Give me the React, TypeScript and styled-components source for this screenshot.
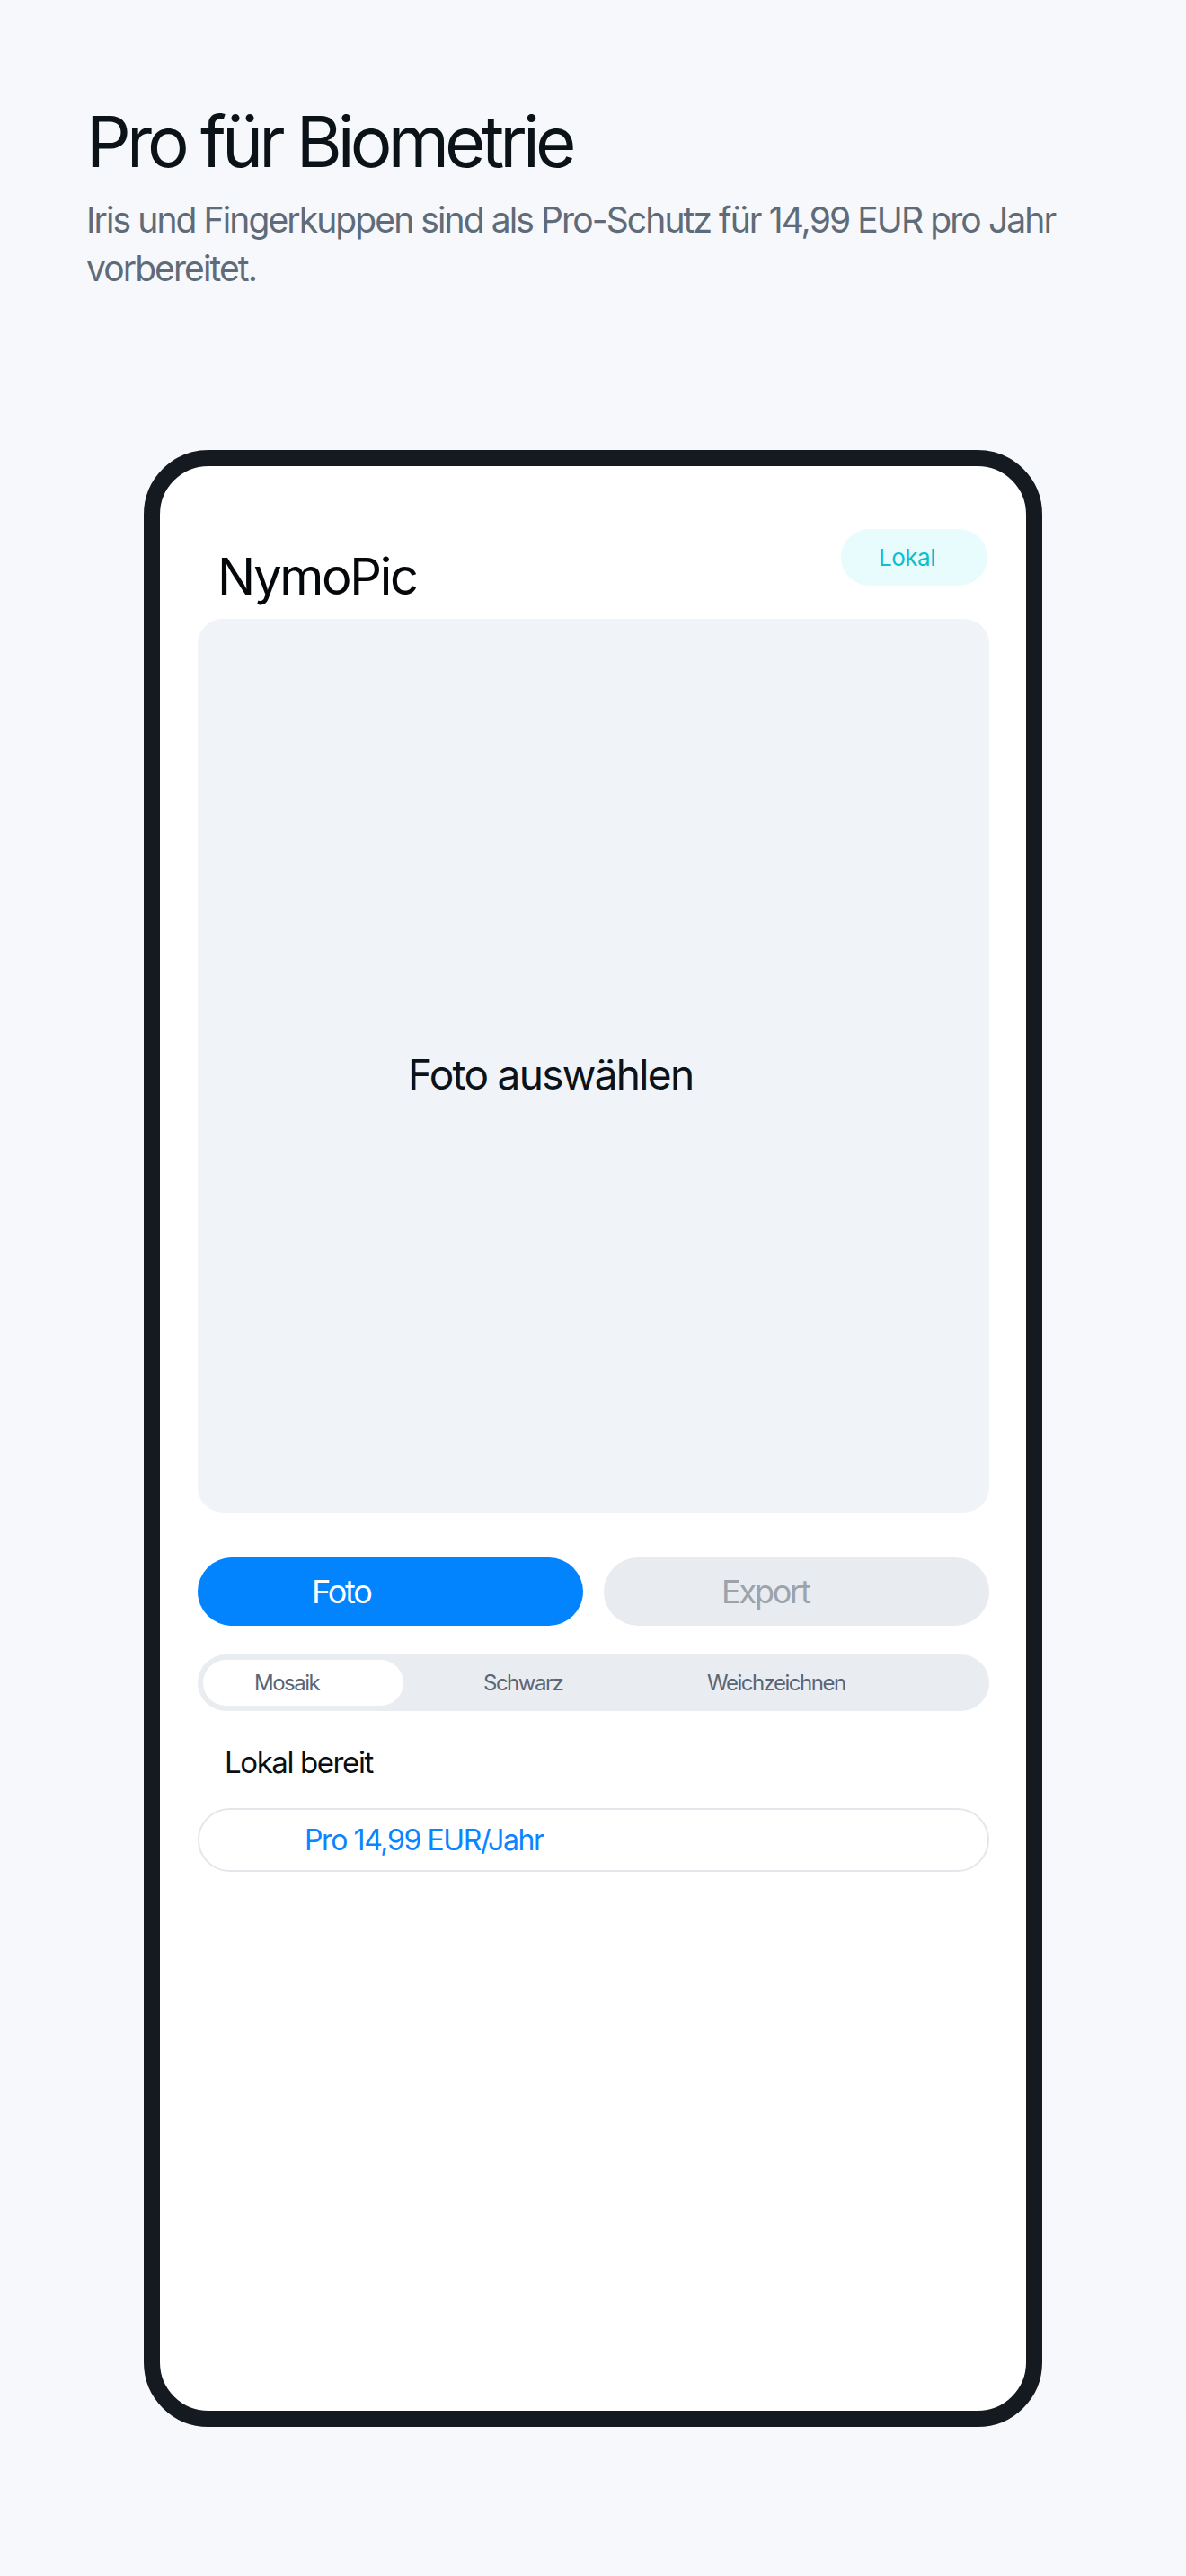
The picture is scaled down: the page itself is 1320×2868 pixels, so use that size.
import React from "react";
import styled, { createGlobalStyle } from "styled-components";

const Global = createGlobalStyle`
  html, body { margin: 0; padding: 0; background: #f6f8fb; }
  body { font-family: Inter, "Noto Sans", sans-serif; -webkit-font-smoothing: antialiased; }
  * { box-sizing: border-box; }
`;

const Page = styled.div`
  width: 1320px;
  min-height: 2868px;
  background: #f6f8fb;
  display: flex;
  flex-direction: column;
`;

const Intro = styled.header`
  padding: 110px 96px 0 96px;
`;

const Title = styled.h1`
  margin: 0;
  font-size: 78px;
  font-weight: 400;
  line-height: normal;
  color: #0b1218;
  letter-spacing: -4.9px;
`;

const Subtitle = styled.p`
  margin: 13px 0 0 0;
  font-size: 39px;
  line-height: 54px;
  color: #5f6b78;
  max-width: 1128px;
  letter-spacing: -1.9px;
`;

const Phone = styled.div`
  margin: 175px auto 0 auto;
  width: 1000px;
  height: 2201px;
  border: 18px solid #151a21;
  border-radius: 72px;
  background: #ffffff;
  overflow: hidden;
`;

const Screen = styled.div`
  height: 100%;
  border-radius: 54px;
  padding: 70px 41px 0 42px;
  display: flex;
  flex-direction: column;
`;

const Header = styled.div`
  display: flex;
  justify-content: space-between;
  align-items: flex-start;
`;

const AppName = styled.div`
  margin: 19px 0 0 22px;
  font-size: 56px;
  line-height: normal;
  color: #05080b;
  letter-spacing: -2.3px;
`;

const Badge = styled.div`
  width: 163px;
  height: 63px;
  margin-right: 2px;
  border-radius: 32px;
  background: #e8fbfd;
  color: #0bbfd0;
  font-size: 26px;
  letter-spacing: -0.5px;
  display: flex;
  align-items: center;
  padding-left: 42px;
`;

const Canvas = styled.div`
  margin-top: 13px;
  height: 995px;
  border-radius: 28px;
  background: #f0f3f7;
  display: flex;
  align-items: center;
  padding: 19px 0 0 234px;
  font-size: 46px;
  letter-spacing: -1.7px;
  color: #0b1218;
`;

const Actions = styled.div`
  margin-top: 50px;
  display: grid;
  grid-template-columns: 1fr 1fr;
  gap: 23px;
`;

const Action = styled.button<{ $primary?: boolean; $pad: number }>`
  height: 76px;
  border: none;
  border-radius: 38px;
  font-family: inherit;
  font-size: 36px;
  letter-spacing: -2.2px;
  text-align: left;
  padding: 0 0 0 ${(p) => p.$pad}px;
  background: ${(p) => (p.$primary ? "#0384ff" : "#e8ebf0")};
  color: ${(p) => (p.$primary ? "#ffffff" : "#9ca3ab")};
`;

const Segments = styled.div`
  margin-top: 32px;
  height: 63px;
  border-radius: 32px;
  background: #e9ecf1;
  padding: 6px;
  display: flex;
`;

const Segment = styled.div<{ $active?: boolean; $w: number; $pad: number }>`
  width: ${(p) => p.$w}px;
  height: 51px;
  border-radius: 26px;
  background: ${(p) => (p.$active ? "#ffffff" : "transparent")};
  display: flex;
  align-items: center;
  padding-left: ${(p) => p.$pad}px;
  font-size: 24px;
  letter-spacing: -1.5px;
  color: #5b6674;
`;

const Status = styled.div`
  margin: 37px 0 0 30px;
  font-size: 33px;
  line-height: normal;
  letter-spacing: -1.4px;
  color: #0b0f14;
`;

const ProButton = styled.div`
  margin-top: 31px;
  height: 71px;
  border: 2px solid #e3e7ec;
  border-radius: 36px;
  display: flex;
  align-items: center;
  padding-left: 117px;
  font-size: 32px;
  letter-spacing: -1.4px;
  color: #0a84ff;
`;

const segments = [
  { label: "Mosaik", w: 223, pad: 57, active: true },
  { label: "Schwarz", w: 271, pad: 89 },
  { label: "Weichzeichnen", w: 375, pad: 67 },
];

export default function App() {
  return (
    <Page>
      <Global />
      <Intro>
        <Title>Pro für Biometrie</Title>
        <Subtitle>
          Iris und Fingerkuppen sind als Pro-Schutz für 14,99 EUR pro Jahr vorbereitet.
        </Subtitle>
      </Intro>
      <Phone>
        <Screen>
          <Header>
            <AppName>NymoPic</AppName>
            <Badge>Lokal</Badge>
          </Header>
          <Canvas>Foto auswählen</Canvas>
          <Actions>
            <Action $primary $pad={127}>Foto</Action>
            <Action $pad={131}>Export</Action>
          </Actions>
          <Segments>
            {segments.map((s) => (
              <Segment key={s.label} $active={s.active} $w={s.w} $pad={s.pad}>
                {s.label}
              </Segment>
            ))}
          </Segments>
          <Status>Lokal bereit</Status>
          <ProButton>Pro 14,99 EUR/Jahr</ProButton>
        </Screen>
      </Phone>
    </Page>
  );
}
